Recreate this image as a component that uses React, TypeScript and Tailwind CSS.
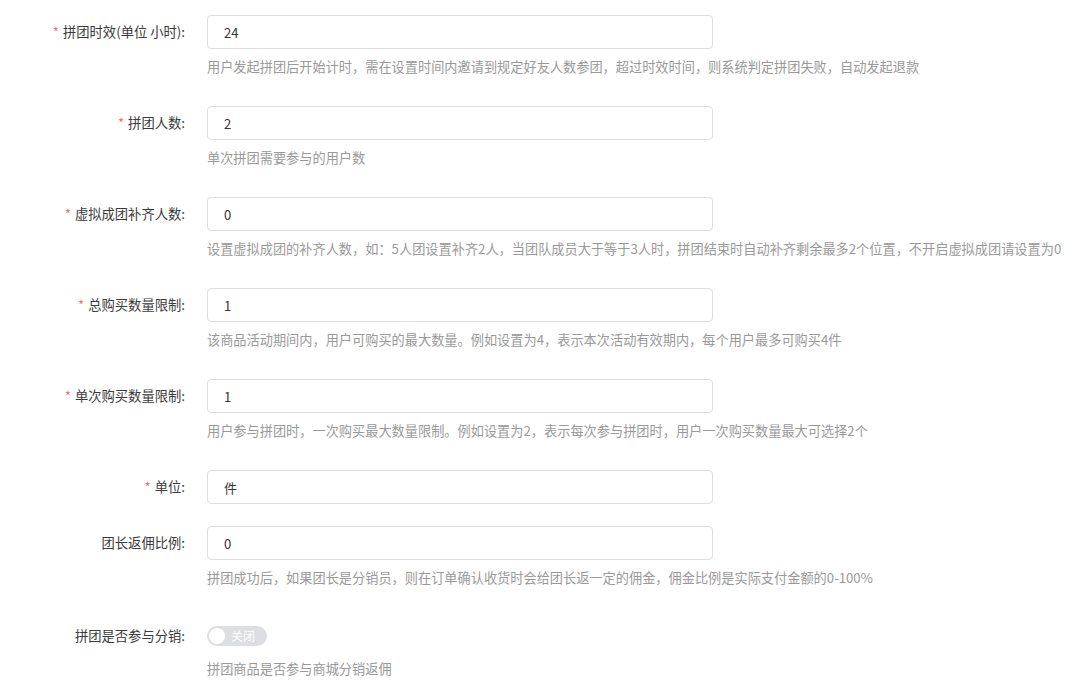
import React from 'react';

interface Field {
  label: string;
  value: string;
  required?: boolean;
  tip?: string;
}

const fields: Field[] = [
  {
    label: '拼团时效(单位 小时)',
    value: '24',
    required: true,
    tip: '用户发起拼团后开始计时，需在设置时间内邀请到规定好友人数参团，超过时效时间，则系统判定拼团失败，自动发起退款',
  },
  { label: '拼团人数', value: '2', required: true, tip: '单次拼团需要参与的用户数' },
  {
    label: '虚拟成团补齐人数',
    value: '0',
    required: true,
    tip: '设置虚拟成团的补齐人数，如：5人团设置补齐2人，当团队成员大于等于3人时，拼团结束时自动补齐剩余最多2个位置，不开启虚拟成团请设置为0',
  },
  {
    label: '总购买数量限制',
    value: '1',
    required: true,
    tip: '该商品活动期间内，用户可购买的最大数量。例如设置为4，表示本次活动有效期内，每个用户最多可购买4件',
  },
  {
    label: '单次购买数量限制',
    value: '1',
    required: true,
    tip: '用户参与拼团时，一次购买最大数量限制。例如设置为2，表示每次参与拼团时，用户一次购买数量最大可选择2个',
  },
  { label: '单位', value: '件', required: true },
  {
    label: '团长返佣比例',
    value: '0',
    tip: '拼团成功后，如果团长是分销员，则在订单确认收货时会给团长返一定的佣金，佣金比例是实际支付金额的0-100%',
  },
];

function Label({ text, required }: { text: string; required?: boolean }) {
  return (
    <label className="w-[207px] shrink-0 pr-[22px] text-right leading-[34px] text-[13.3px] text-[#3a3a3a]">
      {required && <span className="mr-[4px] text-[#f56c6c]">*</span>}
      {text}:
    </label>
  );
}

function Tip({ text }: { text: string }) {
  return <p className="mt-[8px] whitespace-nowrap leading-[20px] text-[13.2px] text-[#999]">{text}</p>;
}

export default function App() {
  return (
    <div
      className="min-h-[690px] bg-white pt-[15px]"
      style={{ fontFamily: '"Microsoft YaHei", "Noto Sans CJK SC", "Noto Sans", sans-serif' }}
    >
      {fields.map((f) => (
        <div key={f.label} className={`flex ${f.tip ? 'mb-[29px]' : 'mb-[22px]'}`}>
          <Label text={f.label} required={f.required} />
          <div>
            <input
              readOnly
              value={f.value}
              className="block h-[34px] w-[506px] rounded-[4px] border border-[#dcdee2] px-[16px] text-[13px] text-[#333] outline-none"
            />
            {f.tip && <Tip text={f.tip} />}
          </div>
        </div>
      ))}

      <div className="flex pt-[2px]">
        <Label text="拼团是否参与分销" />
        <div>
          <div className="flex h-[34px] items-center">
            <button className="flex h-[20px] w-[60px] items-center rounded-full bg-[#dcdee2] pl-[2px]">
              <span className="h-[16px] w-[16px] rounded-full bg-white" />
              <span className="ml-[6px] text-[12px] leading-none text-white">关闭</span>
            </button>
          </div>
          <p className="mt-[6px] leading-[20px] text-[13.2px] text-[#999]">拼团商品是否参与商城分销返佣</p>
        </div>
      </div>
    </div>
  );
}
